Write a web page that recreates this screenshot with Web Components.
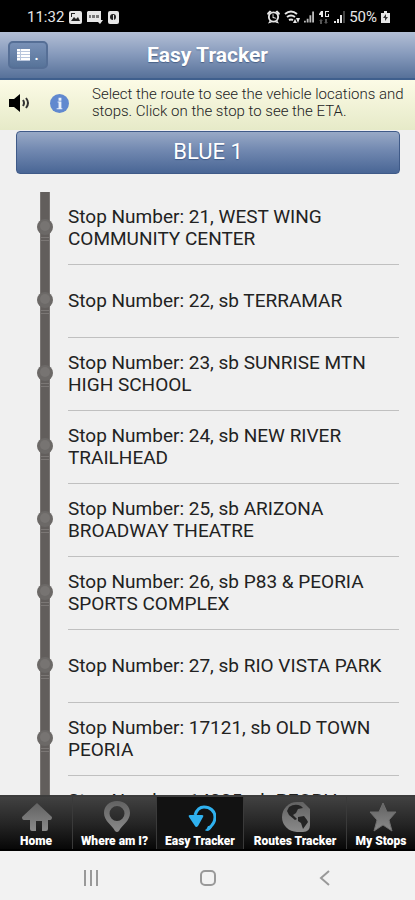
<!DOCTYPE html>
<html lang="en">
<head>
<meta charset="UTF-8">
<meta name="viewport" content="width=device-width, initial-scale=1">
<title>Easy Tracker</title>
<style>
    body {
        margin: 0;
        height: 100vh;
        overflow: hidden;
        background-color: #f0f0f0;
        font-family: Roboto, "Liberation Sans", sans-serif;
    }
</style>
</head>
<body>
<tracker-app></tracker-app>

<script>
const STOPS = [
    "Stop Number: 21, WEST WING COMMUNITY CENTER",
    "Stop Number: 22, sb TERRAMAR",
    "Stop Number: 23, sb SUNRISE MTN HIGH SCHOOL",
    "Stop Number: 24, sb NEW RIVER TRAILHEAD",
    "Stop Number: 25, sb ARIZONA BROADWAY THEATRE",
    "Stop Number: 26, sb P83 &amp; PEORIA SPORTS COMPLEX",
    "Stop Number: 27, sb RIO VISTA PARK",
    "Stop Number: 17121, sb OLD TOWN PEORIA",
    "Stop Number: 14005, sb PEORIA<br>&nbsp;"
];

class StatusBar extends HTMLElement {

    constructor() {
        super();
        this.shadowDOM = this.attachShadow({ mode: "open" });
    }

    connectedCallback() {
        this.render();
    }

    render() {
        this.shadowDOM.innerHTML = `
        <style>
        :host {
            display: flex;
            justify-content: space-between;
            align-items: center;
            height: 32px;
            padding: 2px 25px 0 27px;
            background-color: #000;
            color: #e6e6e6;
            fill: #e6e6e6;
            font-size: 15px;
            box-sizing: border-box;
        }

        div {
            display: flex;
            align-items: center;
            gap: 5px;
        }

        .right {
            gap: 4px;
            font-size: 15px;
        }

        svg {
            display: block;
        }
        </style>
        <div>
            <span>11:32</span>
            <svg width="13" height="13" viewBox="0 0 13 13">
                <rect width="13" height="13" rx="2"/>
                <path d="M2 10l3-4 2 2 2-2 2 4zM2 2h4v1H3v3H2z" fill="#222"/>
            </svg>
            <svg width="16" height="13" viewBox="0 0 16 13">
                <path d="M1 0h13v9h2l-3 4-2-2H0V1z"/>
                <path d="M2 4h2v3H2zM5 4h3v3H5zM9 4h3v3H9z" fill="#777"/>
            </svg>
            <svg width="11" height="13" viewBox="0 0 11 13">
                <rect width="11" height="13" rx="2"/>
                <circle cx="5" cy="6" r="3" fill="#222"/>
                <path d="M5 4h1v5H5z"/>
            </svg>
        </div>
        <div class="right">
            <svg width="13" height="14" viewBox="0 0 14 14">
                <path d="M0 3l3-3 2 1-4 4zM14 3l-3-3-2 1 4 4zM1 14l2-3 2 2zM13 14l-2-3-2 2z"/>
                <circle cx="7" cy="7" r="5" fill="none" stroke="#e6e6e6" stroke-width="2"/>
                <path d="M6 4h1v3l3 1v1L6 8z"/>
            </svg>
            <svg width="16" height="14" viewBox="0 0 16 14">
                <path d="M1 4q6-5 12 0M3 7q4-3 8 0M5 10q2-1 4 0" fill="none" stroke="#e6e6e6" stroke-width="2"/>
                <path d="M9 13l2-4 2 4zM12 8h4l-2 5z"/>
            </svg>
            <svg width="10" height="12" viewBox="0 0 11 12">
                <path d="M0 10h2v2H0zM3 8h2v4H3zM6 4h2v8H6zM9 0h2v12H9z" fill="#bbb"/>
            </svg>
            <svg width="12" height="13" viewBox="0 0 12 13">
                <path d="M3 0h2v6H3V4H1V3zM7 0h4v1H8v4h2V3h1v3H7z"/>
                <path d="M3 8l2 2H4v3H2v-3H1zM8 13l-2-2h1V8h2v3h1z" fill="#555"/>
            </svg>
            <svg width="11" height="12" viewBox="0 0 11 12">
                <path d="M0 10h2v2H0zM3 8h2v4H3zM6 4h2v8H6z"/>
                <path d="M9 0h2v12H9z" fill="#444"/>
            </svg>
            <span>50%</span>
            <svg width="9" height="12" viewBox="0 0 9 12">
                <path d="M3 0h3v2h3v10H0V2h3z"/>
                <path d="M5 3L2 7h2v3l3-4H5z" fill="#333"/>
            </svg>
        </div>`;
    }
}

class AppHeader extends HTMLElement {

    constructor() {
        super();
        this.shadowDOM = this.attachShadow({ mode: "open" });
    }

    connectedCallback() {
        this.render();
    }

    render() {
        this.shadowDOM.innerHTML = `
        <style>
        :host {
            display: grid;
            grid-template-columns: 40px 1fr 40px;
            align-items: center;
            height: 48px;
            padding: 0 8px;
            box-sizing: border-box;
            background: linear-gradient(#b3bfd5, #8599bb 50%, #577199);
            border-bottom: 2px solid #3f5f8d;
        }

        button {
            display: flex;
            align-items: center;
            justify-content: center;
            gap: 4px;
            height: 28px;
            padding: 0;
            border: 2px solid #566f96;
            border-radius: 5px;
            background: linear-gradient(#7890b6, #577399);
            color: #fff;
            font: bold 14px Roboto, sans-serif;
        }

        h1 {
            margin: 0;
            color: #fff;
            font-size: 21px;
            line-height: 24px;
            text-align: center;
            text-shadow: 0 1px 1px #4a6288;
        }
        </style>
        <button type="button" aria-label="Menu">
            <svg width="13" height="12" viewBox="0 0 13 12">
                <path d="M0 0h13v12H0z" fill="#b9c6dc"/>
                <path d="M0 0h3v2H0zM4 0h9v2H4zM0 3h3v2H0zM4 3h9v2H4zM0 6h3v2H0zM4 6h9v2H4zM0 9h3v2H0zM4 9h9v2H4z" fill="#fff"/>
            </svg>
            <span>.</span>
        </button>
        <h1><slot></slot></h1>`;
    }
}

class InfoBanner extends HTMLElement {

    constructor() {
        super();
        this.shadowDOM = this.attachShadow({ mode: "open" });
    }

    connectedCallback() {
        this.render();
    }

    render() {
        this.shadowDOM.innerHTML = `
        <style>
        :host {
            display: flex;
            align-items: center;
            height: 50px;
            padding: 0 0 4px 8px;
            box-sizing: border-box;
            background: linear-gradient(#fcfbe6, #e6eac8);
            color: #222;
        }

        button {
            display: block;
            padding: 0;
            border: 0;
            background: none;
        }

        svg {
            display: block;
        }

        .info {
            margin: 0 23px 0 20px;
        }

        p {
            flex: 1;
            margin: 0;
            font-size: 15px;
            font-weight: 300;
            line-height: 17px;
        }
        </style>
        <button type="button" aria-label="Speak">
            <svg width="22" height="18" viewBox="0 0 22 18">
                <path d="M1 5h5l6-5v18l-6-5H1z"/>
                <path d="M15 6q2 3 0 6M18 4q4 5 0 10" fill="none" stroke="#333" stroke-width="2"/>
            </svg>
        </button>
        <button type="button" class="info" aria-label="Information">
            <svg width="19" height="19" viewBox="0 0 20 20">
                <circle cx="10" cy="10" r="10" fill="#6189cf"/>
                <path d="M8 8h4v7h1v1H7v-1h2V9H8zM9 4h3v3H9z" fill="#e8f0fa"/>
            </svg>
        </button>
        <p><slot></slot></p>`;
    }
}

class RouteButton extends HTMLElement {

    constructor() {
        super();
        this.shadowDOM = this.attachShadow({ mode: "open" });
    }

    connectedCallback() {
        this.render();
    }

    render() {
        this.shadowDOM.innerHTML = `
        <style>
        :host {
            display: block;
            padding: 1px 15px 18px 16px;
        }

        button {
            display: block;
            width: 100%;
            height: 43px;
            padding: 0 0 2px;
            border: 1px solid #3f5a88;
            border-radius: 4px;
            background: linear-gradient(#98a9c6, #7188b0 45%, #496695);
            color: #fff;
            font: 22px Roboto, sans-serif;
            text-shadow: 0 1px 1px #3f5a88;
        }
        </style>
        <button type="button"><slot></slot></button>`;
    }
}

class StopItem extends HTMLElement {

    constructor() {
        super();
        this.shadowDOM = this.attachShadow({ mode: "open" });
    }

    connectedCallback() {
        this.render();
    }

    render() {
        this.shadowDOM.innerHTML = `
        <style>
        :host {
            display: flex;
            height: 73px;
            padding: 0 16px 0 37px;
        }

        .rail {
            width: 16px;
            height: 73px;
            margin-right: 15px;
        }

        .name {
            flex: 1;
            display: flex;
            align-items: center;
            border-bottom: 1px solid #c0c0c0;
            color: #222;
        }

        p {
            margin: 0;
            font-size: 19px;
            line-height: 22px;
        }
        </style>
        <svg class="rail" viewBox="0 0 16 73">
            <path d="M3 0h10v73H3z" fill="#797573"/>
            <path d="M4 0h8v73H4z" fill="#625e5c"/>
            <circle cx="8" cy="35" r="8" fill="#6c6967"/>
            <circle cx="8" cy="34" r="5" fill="#777472"/>
            <path d="M4 45h8v1H4zM4 48h8v1H4z" fill="#7b7775"/>
        </svg>
        <div class="name"><p><slot></slot></p></div>`;
    }
}

class TabItem extends HTMLElement {

    constructor() {
        super();
        this.shadowDOM = this.attachShadow({ mode: "open" });
    }

    connectedCallback() {
        this.render();
    }

    render() {
        this.shadowDOM.innerHTML = `
        <style>
        :host {
            display: block;
            border-right: 1px solid #3a3a3a;
        }

        :host([active]) {
            background-color: #121212;
        }

        :host(:last-child) {
            border-right: 0;
        }

        button {
            display: flex;
            flex-direction: column;
            align-items: center;
            gap: 1px;
            width: 100%;
            height: 100%;
            padding: 4px 0 0;
            border: 0;
            background: none;
            color: #fff;
            font: 900 12px/14px Roboto, sans-serif;
            white-space: nowrap;
        }
        </style>
        <button type="button">
            <slot name="icon"></slot>
            <slot></slot>
        </button>`;
    }
}

class TabBar extends HTMLElement {

    constructor() {
        super();
        this.shadowDOM = this.attachShadow({ mode: "open" });
    }

    connectedCallback() {
        this.render();
    }

    render() {
        this.shadowDOM.innerHTML = `
        <style>
        :host {
            display: block;
        }

        nav {
            display: grid;
            grid-template-columns: 73fr 84fr 87fr 103fr 68fr;
            height: 56px;
            box-sizing: border-box;
            border-top: 2px solid #3c3c3c;
            border-bottom: 2px solid #000;
            background: linear-gradient(#414141, #262626 50%, #070707);
        }

        svg {
            display: block;
            width: 32px;
            height: 32px;
        }

        .defs {
            position: absolute;
            width: 0;
            height: 0;
        }
        </style>
        <svg class="defs" aria-hidden="true">
            <linearGradient id="grey" x2="0" y2="1">
                <stop stop-color="#626262"/>
                <stop offset="1" stop-color="#8a8a8a"/>
            </linearGradient>
        </svg>
        <nav>
            <tab-item>
                <svg slot="icon" viewBox="0 0 32 32" fill="url(#grey)">
                    <path d="M17 2l15 14q0 3-2 3h-2v9q0 2-2 2h-4V20h-6v10h-4q-2 0-2-2v-9H4q-2 0-2-3z"/>
                </svg>Home
            </tab-item>
            <tab-item>
                <svg slot="icon" viewBox="0 0 32 32" fill="url(#grey)">
                    <path fill-rule="evenodd" d="M18 0c8 0 13 5 13 12 0 8-8 12-11 18q-2 2-4 0C13 24 5 20 5 12 5 5 10 0 18 0zm0 5a7 7 0 1 0 0 15a7 7 0 1 0 0-15z"/>
                </svg>Where am I?
            </tab-item>
            <tab-item active>
                <svg slot="icon" viewBox="0 0 32 32">
                    <path d="M12 14C14 8 17 6 21 6c6 0 11 4 11 10 0 5-2 8-6 11" transform="translate(-1)" fill="none" stroke="#2fb1ef" stroke-width="3"/>
                    <path d="M24 30q-3 0-3-1 2-1 3-4h4q0 3-4 5z" fill="#2fb1ef"/>
                    <path d="M6 14h12q2 0 1 2l-5 9q-2 2-3 0L5 16q-1-2 1-2z" fill="#2fb1ef"/>
                </svg>Easy Tracker
            </tab-item>
            <tab-item>
                <svg slot="icon" viewBox="0 0 32 32" fill="url(#grey)">
                    <path d="M18 1h6l7 7v16q0 7-7 7h-6A15 15 0 0 1 18 1z"/>
                    <path d="M10 6q6-4 12-1l2 2-5 1-2 4-3 2 4 4-2 1-6-5-2-4zM19 16l6-1 3 4 1 2-5 7-2-6-3-2z" fill="#242424"/>
                </svg>Routes Tracker
            </tab-item>
            <tab-item>
                <svg slot="icon" viewBox="0 0 32 32" fill="url(#grey)" stroke="#6e6e6e" stroke-linejoin="round">
                    <path d="M18 2l4 9h9l-7 8 3 11-9-6-9 6 3-11-7-8h9z"/>
                </svg>My Stops
            </tab-item>
        </nav>`;
    }
}

class SystemNav extends HTMLElement {

    constructor() {
        super();
        this.shadowDOM = this.attachShadow({ mode: "open" });
    }

    connectedCallback() {
        this.render();
    }

    render() {
        this.shadowDOM.innerHTML = `
        <style>
        :host {
            display: grid;
            grid-template-columns: repeat(3, 117px);
            justify-content: center;
            height: 49px;
            background-color: #f2f2f2;
        }

        button {
            display: flex;
            align-items: center;
            justify-content: center;
            padding: 4px 0 0;
            border: 0;
            background: none;
        }

        svg {
            fill: none;
            stroke: #999;
            stroke-width: 2;
        }
        </style>
        <button type="button" aria-label="Recent apps">
            <svg width="16" height="16" viewBox="0 0 16 16"><path d="M2 0v16M8 0v16M14 0v16"/></svg>
        </button>
        <button type="button" aria-label="Home screen">
            <svg width="16" height="16" viewBox="0 0 16 16"><rect x="1" y="1" width="14" height="14" rx="4"/></svg>
        </button>
        <button type="button" aria-label="Back">
            <svg width="16" height="16" viewBox="0 0 16 16"><path d="M12 1L4 8l8 7"/></svg>
        </button>`;
    }
}

class TrackerApp extends HTMLElement {

    constructor() {
        super();
        this.shadowDOM = this.attachShadow({ mode: "open" });
    }

    connectedCallback() {
        this.render();
    }

    render() {
        const items = STOPS.map(stop => `<stop-item>${stop}</stop-item>`).join("");
        this.shadowDOM.innerHTML = `
        <style>
        :host {
            display: flex;
            flex-direction: column;
            height: 100vh;
        }

        main {
            flex: 1;
            min-height: 0;
            overflow: hidden;
        }
        </style>
        <status-bar></status-bar>
        <app-header>Easy Tracker</app-header>
        <info-banner>Select the route to see the vehicle locations and stops. Click on the stop to see the ETA.</info-banner>
        <route-button>BLUE 1</route-button>
        <main>${items}</main>
        <tab-bar></tab-bar>
        <system-nav></system-nav>`;
    }
}

customElements.define("status-bar", StatusBar);
customElements.define("app-header", AppHeader);
customElements.define("info-banner", InfoBanner);
customElements.define("route-button", RouteButton);
customElements.define("stop-item", StopItem);
customElements.define("tab-item", TabItem);
customElements.define("tab-bar", TabBar);
customElements.define("system-nav", SystemNav);
customElements.define("tracker-app", TrackerApp);
</script>
</body>
</html>
